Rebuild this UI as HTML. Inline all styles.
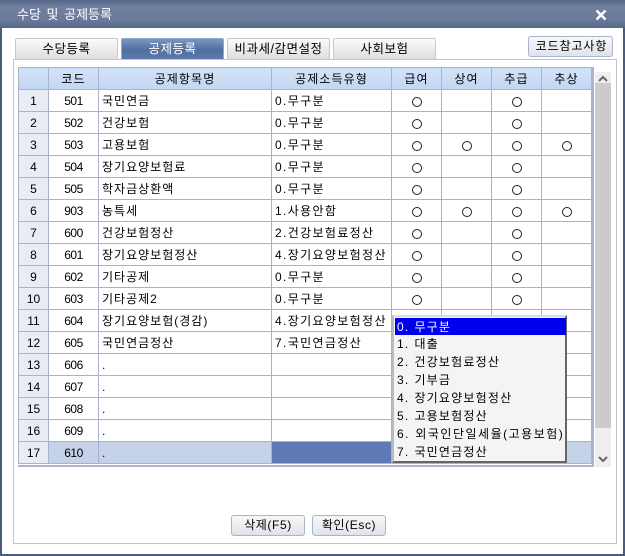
<!DOCTYPE html>
<html lang="ko"><head><meta charset="utf-8"><style>
html,body{margin:0;padding:0}
body{width:625px;height:556px;overflow:hidden;position:relative;background:#fff;font:12px/22px "Liberation Sans","Noto Sans CJK KR","NanumGothic",sans-serif;color:#000}
div{position:absolute;box-sizing:border-box}
svg{display:block}
.win{left:0;top:0;width:625px;height:556px;border:2px solid #4b5b7d;background:#fff}
.title{left:0;top:0;width:625px;height:28px;background:linear-gradient(#56678a,#71809f 25%,#6b7a9a 70%,#56678a);color:#fff;font-size:13px;line-height:30px;padding-left:17px;word-spacing:2px}
.x{left:595px;top:9px}
.tab{top:38px;height:21px;border:1px solid #c8c8c8;border-bottom:0;border-radius:2px 2px 0 0;background:linear-gradient(#fbfbfb,#dedede);text-align:center;line-height:20px;font-size:12.5px;letter-spacing:.5px}
.on{background:linear-gradient(#7d96bf,#4f6f9f 55%,#5c7bab);border-color:#8fa8d0;color:#fff}
.panel{left:13px;top:59px;width:604px;height:485px;border:1px solid #c4c4c4;background:#fff}
.frame{left:18px;top:67px;width:576px;height:400px;border-right:2px solid #a9b4cb;border-bottom:2px solid #a9b4cb}
table{position:absolute;left:18px;top:67px;border-collapse:collapse;table-layout:fixed;width:574px}
td,th{border:1px solid #a9b4cb;height:21px;padding:0;font-weight:normal;text-align:center;overflow:hidden;white-space:nowrap;line-height:20px;font-size:12px}
th{background:linear-gradient(#d3e3f8,#c0d6f2);letter-spacing:1.1px}
td.n{background:#e8ecf5}
td.c{letter-spacing:-.5px}
td.l{text-align:left;padding-left:3px;letter-spacing:1px}
td.t{text-align:left;padding-left:3px;letter-spacing:1.35px}
i{display:inline-block;width:10px;height:10px;border:1px solid #222;border-radius:50%;box-sizing:border-box;vertical-align:-2px}
tr.s td{background:#c5d2e8}
tr.s td.n{background:#e8ecf5}
tr.s td.a{background:#5d7ab5}
.sb{left:595px;top:72px;width:16px;height:395px;background:#eee}
.th{left:0;top:11px;width:16px;height:345px;background:#cbcbcb}
.pop{left:392px;top:315px;width:175px;height:148px;background:#f4f4f4;border:2px solid;border-color:#d8dce8 #666 #666 #bbb}
.it{left:3px;width:170px;height:18px;line-height:18px;font-size:12px;letter-spacing:1.2px;word-spacing:.5px;white-space:nowrap}
.sel{left:1px;top:1px;width:171px;height:17px;background:#0000f0;color:#fff;padding-left:2px}
.btn{border:1px solid #a6b4cf;border-radius:3px;background:linear-gradient(#f8f8f8,#dfe3ea);text-align:center;font-size:12px;letter-spacing:.6px}
</style></head><body>
<div class="win"></div>
<div class="title">수당 및 공제등록</div>
<div class="x"><svg width="12" height="12" viewBox="0 0 12 12"><path d="M1.5 1.5L10.5 10.5M10.5 1.5L1.5 10.5" stroke="#fff" stroke-width="2.4" fill="none"/></svg></div>
<div class="panel"></div>
<div class="tab" style="left:15px;width:103px">수당등록</div>
<div class="tab on" style="left:121px;width:103px">공제등록</div>
<div class="tab" style="left:227px;width:103px">비과세/감면설정</div>
<div class="tab" style="left:333px;width:103px">사회보험</div>
<div class="btn" style="left:528px;top:36px;width:85px;height:21px;line-height:19px;letter-spacing:.9px;padding-left:2px">코드참고사항</div>
<div class="frame"></div>
<table>
<colgroup><col style="width:30px"><col style="width:50px"><col style="width:173px"><col style="width:120px"><col style="width:50px"><col style="width:50px"><col style="width:50px"><col style="width:50px"></colgroup>
<tr><th></th><th>코드</th><th>공제항목명</th><th>공제소득유형</th><th>급여</th><th>상여</th><th>추급</th><th>추상</th></tr>
<tr><td class="n">1</td><td class="c">501</td><td class="l">국민연금</td><td class="t">0.무구분</td><td><i></i></td><td></td><td><i></i></td><td></td></tr>
<tr><td class="n">2</td><td class="c">502</td><td class="l">건강보험</td><td class="t">0.무구분</td><td><i></i></td><td></td><td><i></i></td><td></td></tr>
<tr><td class="n">3</td><td class="c">503</td><td class="l">고용보험</td><td class="t">0.무구분</td><td><i></i></td><td><i></i></td><td><i></i></td><td><i></i></td></tr>
<tr><td class="n">4</td><td class="c">504</td><td class="l">장기요양보험료</td><td class="t">0.무구분</td><td><i></i></td><td></td><td><i></i></td><td></td></tr>
<tr><td class="n">5</td><td class="c">505</td><td class="l">학자금상환액</td><td class="t">0.무구분</td><td><i></i></td><td></td><td><i></i></td><td></td></tr>
<tr><td class="n">6</td><td class="c">903</td><td class="l">농특세</td><td class="t">1.사용안함</td><td><i></i></td><td><i></i></td><td><i></i></td><td><i></i></td></tr>
<tr><td class="n">7</td><td class="c">600</td><td class="l">건강보험정산</td><td class="t">2.건강보험료정산</td><td><i></i></td><td></td><td><i></i></td><td></td></tr>
<tr><td class="n">8</td><td class="c">601</td><td class="l">장기요양보험정산</td><td class="t">4.장기요양보험정산</td><td><i></i></td><td></td><td><i></i></td><td></td></tr>
<tr><td class="n">9</td><td class="c">602</td><td class="l">기타공제</td><td class="t">0.무구분</td><td><i></i></td><td></td><td><i></i></td><td></td></tr>
<tr><td class="n">10</td><td class="c">603</td><td class="l">기타공제2</td><td class="t">0.무구분</td><td><i></i></td><td></td><td><i></i></td><td></td></tr>
<tr><td class="n">11</td><td class="c">604</td><td class="l">장기요양보험(경감)</td><td class="t">4.장기요양보험정산</td><td></td><td></td><td></td><td></td></tr>
<tr><td class="n">12</td><td class="c">605</td><td class="l">국민연금정산</td><td class="t">7.국민연금정산</td><td></td><td></td><td></td><td></td></tr>
<tr><td class="n">13</td><td class="c">606</td><td class="l">.</td><td></td><td></td><td></td><td></td><td></td></tr>
<tr><td class="n">14</td><td class="c">607</td><td class="l">.</td><td></td><td></td><td></td><td></td><td></td></tr>
<tr><td class="n">15</td><td class="c">608</td><td class="l">.</td><td></td><td></td><td></td><td></td><td></td></tr>
<tr><td class="n">16</td><td class="c">609</td><td class="l">.</td><td></td><td></td><td></td><td></td><td></td></tr>
<tr class="s"><td class="n">17</td><td class="c">610</td><td class="l">.</td><td class="a"></td><td></td><td></td><td></td><td></td></tr>
</table>
<div class="sb"><div class="th"></div>
<svg style="position:absolute;left:3px;top:3px" width="10" height="7"><path d="M1 6L5 2L9 6" stroke="#666" stroke-width="2" fill="none"/></svg>
<svg style="position:absolute;left:3px;top:384px" width="10" height="7"><path d="M1 1L5 5L9 1" stroke="#666" stroke-width="2" fill="none"/></svg>
</div>
<div class="pop">
<div class="it sel">0. 무구분</div>
<div class="it" style="top:18px">1. 대출</div>
<div class="it" style="top:36px">2. 건강보험료정산</div>
<div class="it" style="top:54px">3. 기부금</div>
<div class="it" style="top:72px">4. 장기요양보험정산</div>
<div class="it" style="top:90px">5. 고용보험정산</div>
<div class="it" style="top:108px;letter-spacing:1.5px">6. 외국인단일세율(고용보험)</div>
<div class="it" style="top:126px">7. 국민연금정산</div>
</div>
<div class="btn" style="left:231px;top:515px;width:74px;height:21px;line-height:19px">삭제(F5)</div>
<div class="btn" style="left:312px;top:515px;width:74px;height:21px;line-height:19px">확인(Esc)</div>
</body></html>
